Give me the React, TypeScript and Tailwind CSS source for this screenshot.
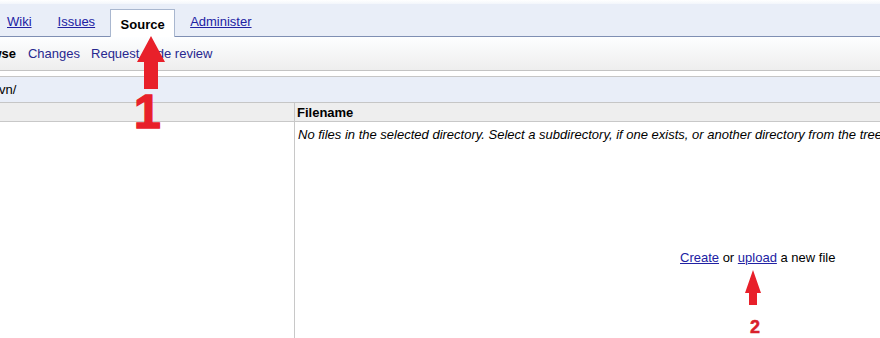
import React from "react";

export default function App() {
  const font = { fontFamily: '"Liberation Sans", Arial, sans-serif' };
  return (
    <div className="relative w-[880px] h-[338px] overflow-hidden bg-white text-[13px] text-black" style={font}>
      <div className="h-[4px] bg-gradient-to-b from-white to-[#f3f6fb]" />
      {/* tab bar */}
      <div className="flex items-end h-[33px] bg-[#e9eef8] border-b border-[#7f8fb3]">
        <a className="self-end mb-[7px] ml-[7px] leading-[15px] text-[#2121a3] underline">Wiki</a>
        <a className="self-end mb-[7px] ml-[26px] leading-[15px] text-[#2121a3] underline">Issues</a>
        <div className="ml-[15px] mb-[-1px] h-[28px] w-[65px] flex items-center justify-center bg-white border border-b-0 border-[#a9b7cf] font-bold leading-[15px] pt-[1px]">
          Source
        </div>
        <a className="self-end mb-[7px] ml-[15px] leading-[15px] text-[#2121a3] underline">Administer</a>
      </div>
      {/* sub nav */}
      <div className="flex items-center h-[34px] bg-gradient-to-b from-[#fdfeff] to-[#eeeeee] border-b border-[#c3c3c3] leading-[15px]">
        <span className="ml-[-31px] font-bold">Browse</span>
        <span className="ml-[12px] text-[#28288f]">Changes</span>
        <span className="ml-[11px] text-[#28288f]">Request code review</span>
      </div>
      {/* path bar */}
      <div className="mt-[5px] h-[27px] flex items-center bg-[#e9eef8] border-t border-b border-[#c6c6c6] leading-[15px]">
        <span className="ml-[-11px]">/svn/</span>
      </div>
      {/* table header */}
      <div className="flex h-[19px] bg-[#eeeeee] border-b border-[#c8c8c8] leading-[15px]">
        <div className="w-[295px] border-r border-[#c8c8c8]" />
        <div className="pl-[2px] font-bold flex items-center">Filename</div>
      </div>
      {/* body */}
      <div className="flex h-[216px]">
        <div className="w-[295px] shrink-0 border-r border-[#c8c8c8]" />
        <div className="flex-1 min-w-0 overflow-hidden">
          <div className="pt-[5px] pl-[3px] italic whitespace-nowrap leading-[15px]">
            No files in the selected directory. Select a subdirectory, if one exists, or another directory from the tree.
          </div>
          <div className="mt-[108px] pl-[385px] whitespace-nowrap leading-[15px]">
            <a className="text-[#2121a3] underline">Create</a> or{" "}
            <a className="text-[#2121a3] underline">upload</a> a new file
          </div>
        </div>
      </div>

      {/* annotation arrows */}
      <svg className="absolute left-0 top-0 pointer-events-none" width="880" height="338">
        <polygon points="151,36 165,62 158,62 158,89 144,89 144,62 137,62" fill="#e8202a" />
        <polygon points="753,270 761,293 757,293 757,305 749,305 749,293 745,293" fill="#e8202a" />
      </svg>
      <div className="absolute left-[134px] top-[88px] text-[48px] leading-none font-bold text-[#e8202a] [-webkit-text-stroke:1.5px_#e8202a]">1</div>
      <div className="absolute left-[750px] top-[318px] text-[18px] leading-none font-bold text-[#d9202a] [-webkit-text-stroke:0.5px_#d9202a]">2</div>
    </div>
  );
}
